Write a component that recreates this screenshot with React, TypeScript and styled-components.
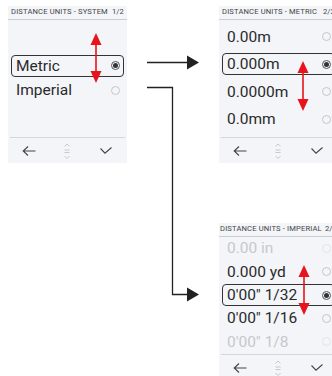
import React from 'react'
import styled, { createGlobalStyle } from 'styled-components'

const GlobalStyle = createGlobalStyle`
  html, body {
    margin: 0;
    padding: 0;
    background: #fff;
  }
  body {
    font-family: Roboto, "Liberation Sans", sans-serif;
  }
`

// the whole drawing: screens are nodes on a free canvas
const Canvas = styled.div`
  position: relative;
  width: 332px;
  height: 376px;
  overflow: hidden;
  background: #fff;
`

const Screen = styled.div<{ $x: number; $y: number }>`
  position: absolute;
  left: ${(p) => p.$x}px;
  top: ${(p) => p.$y}px;
  width: 119px;
  height: 157px;
  background: #f3f5f9;
  display: flex;
  flex-direction: column;
  overflow: hidden;
`

const Header = styled.div`
  flex: 0 0 11px;
  display: flex;
  justify-content: center;
  gap: 3px;
  padding: 0 3px;
  border-bottom: 1px solid #c9ccd1;
  font-size: 7.6px;
  letter-spacing: 0.15px;
  line-height: 12.5px;
  color: #444;
  white-space: nowrap;
`

const Title = styled.span`
  flex: 1 0 auto;
`

const Page = styled.span`
  flex: 0 0 auto;
`

const List = styled.div<{ $gap: number }>`
  flex: 0 0 117px;
  display: flex;
  flex-direction: column;
  justify-content: center;
  gap: ${(p) => p.$gap}px;
  position: relative;
`

const Row = styled.div<{ $selected?: boolean; $faded?: boolean }>`
  height: 22px;
  margin: 0 3px;
  padding: 0 3px 0 4px;
  box-sizing: border-box;
  display: flex;
  align-items: center;
  justify-content: space-between;
  border: 1px solid ${(p) => (p.$selected ? '#333' : 'transparent')};
  border-radius: 4px;
  font-size: 15.5px;
  line-height: 20px;
  color: ${(p) => (p.$faded ? '#c6c8cc' : '#2a2a2a')};
  white-space: nowrap;
`

const Radio = styled.span<{ $on?: boolean; $faded?: boolean }>`
  width: 9px;
  height: 9px;
  box-sizing: border-box;
  border-radius: 50%;
  border: 1px solid ${(p) => (p.$on ? '#555' : p.$faded ? '#e2e4e8' : '#c4c6ca')};
  display: flex;
  align-items: center;
  justify-content: center;
  flex: 0 0 auto;

  &::after {
    content: '';
    display: ${(p) => (p.$on ? 'block' : 'none')};
    width: 5px;
    height: 5px;
    border-radius: 50%;
    background: #333;
  }
`

const NavBar = styled.div`
  flex: 0 0 27px;
  display: grid;
  grid-template-columns: repeat(3, 1fr);
  align-items: center;
  justify-items: center;
  border-top: 1px solid #d3d6db;
  margin: 0 2px;
`

const RedArrowBox = styled.svg<{ $left: number; $top: number }>`
  position: absolute;
  left: ${(p) => p.$left}px;
  top: ${(p) => p.$top}px;
  overflow: visible;
`

const Connectors = styled.svg`
  position: absolute;
  left: 0;
  top: 0;
  pointer-events: none;
`

type Item = { label: string; selected?: boolean; faded?: boolean }

const BackIcon = () => (
  <svg width="14" height="10" viewBox="0 0 14 10">
    <path d="M1 5 H13.5 M6 0.5 L1.2 5 L6 9.5" fill="none" stroke="#444" strokeWidth="1.1" />
  </svg>
)

const ScrollIcon = () => (
  <svg width="6" height="17" viewBox="0 0 6 17">
    <path d="M0.5 3.5 L3 1 L5.5 3.5 M0.5 7 H5.5 M0.5 9.5 H5.5 M0.5 13 L3 15.5 L5.5 13" fill="none" stroke="#c2c4c8" strokeWidth="0.9" />
  </svg>
)

const CheckIcon = () => (
  <svg width="12" height="8" viewBox="0 0 12 8">
    <path d="M0.5 1.5 L5 6.2 L11.5 0.5" fill="none" stroke="#444" strokeWidth="1.1" />
  </svg>
)

const RedArrow = ({ left, top }: { left: number; top: number }) => (
  <RedArrowBox $left={left - 6} $top={top} width="12" height="50" viewBox="0 0 12 50">
    <path d="M6 10 V40" stroke="#e8141c" strokeWidth="1.6" />
    <polygon points="6,0 0.5,12 11.5,12" fill="#e8141c" />
    <polygon points="6,50 0.5,38 11.5,38" fill="#e8141c" />
  </RedArrowBox>
)

const UnitScreen = ({
  x,
  y,
  title,
  page,
  items,
  gap,
  arrow,
}: {
  x: number
  y: number
  title: string
  page: string
  items: Item[]
  gap: number
  arrow: { left: number; top: number }
}) => (
  <Screen $x={x} $y={y}>
    <Header>
      <Title>{title}</Title>
      <Page>{page}</Page>
    </Header>
    <List $gap={gap}>
      {items.map((it) => (
        <Row key={it.label} $selected={it.selected} $faded={it.faded}>
          <span>{it.label}</span>
          <Radio $on={it.selected} $faded={it.faded} />
        </Row>
      ))}
      <RedArrow left={arrow.left} top={arrow.top} />
    </List>
    <NavBar>
      <BackIcon />
      <ScrollIcon />
      <CheckIcon />
    </NavBar>
  </Screen>
)

export default function App() {
  return (
    <>
      <GlobalStyle />
      <Canvas>
        <UnitScreen
          x={8}
          y={6}
          title="DISTANCE UNITS - SYSTEM"
          page="1/2"
          gap={2.5}
          arrow={{ left: 88, top: 13 }}
          items={[{ label: 'Metric', selected: true }, { label: 'Imperial' }]}
        />
        <UnitScreen
          x={219}
          y={6}
          title="DISTANCE UNITS - METRIC"
          page="2/2"
          gap={5.5}
          arrow={{ left: 84, top: 41 }}
          items={[
            { label: '0.00m' },
            { label: '0.000m', selected: true },
            { label: '0.0000m' },
            { label: '0.0mm' },
          ]}
        />
        <UnitScreen
          x={219}
          y={223}
          title="DISTANCE UNITS - IMPERIAL"
          page="2/2"
          gap={1.3}
          arrow={{ left: 85, top: 28 }}
          items={[
            { label: '0.00 in', faded: true },
            { label: '0.000 yd' },
            { label: '0\'00" 1/32', selected: true },
            { label: '0\'00" 1/16' },
            { label: '0\'00" 1/8', faded: true },
          ]}
        />
        <Connectors width="332" height="376" viewBox="0 0 332 376">
          <path d="M147 62.5 H189" stroke="#222" strokeWidth="1.3" fill="none" />
          <polygon points="187,55.5 199,62.5 187,69.5" fill="#222" />
          <path d="M147 87.5 H172.5 V294.5 H189" stroke="#222" strokeWidth="1.3" fill="none" />
          <polygon points="187,287.5 199,294.5 187,301.5" fill="#222" />
        </Connectors>
      </Canvas>
    </>
  )
}
